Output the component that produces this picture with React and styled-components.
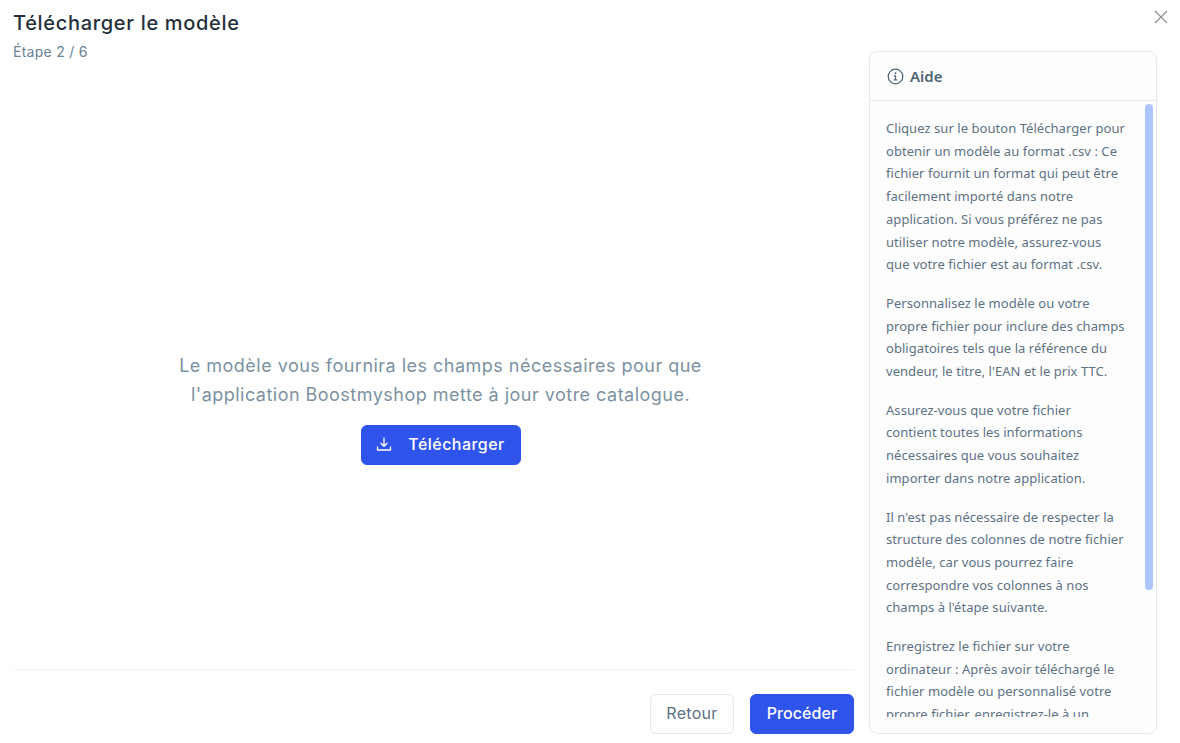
import React from "react";
import styled, { createGlobalStyle } from "styled-components";

const Global = createGlobalStyle`
  html, body { margin: 0; padding: 0; background: #fff; }
  * { box-sizing: border-box; }
`;

const display = `Inter, "Open Sans", sans-serif`;
const body = `"Noto Sans", "Open Sans", sans-serif`;

const Modal = styled.div`
  position: relative;
  width: 1180px;
  height: 743px;
  padding: 8px 23px 9px 13px;
  display: grid;
  grid-template-columns: 841px 288px;
  column-gap: 15px;
  overflow: hidden;
`;
const Main = styled.main`
  display: flex;
  flex-direction: column;
  min-height: 0;
`;
const Title = styled.h1`
  margin: 0;
  font: 500 20px/30px ${display};
  color: #252f3a;
  letter-spacing: 0.68px;
`;
const Step = styled.p`
  margin: 3px 0 0;
  font: 400 14px/22px ${display};
  color: #6a8294;
  letter-spacing: 0.27px;
`;
const Center = styled.div`
  flex: 1;
  display: flex;
  flex-direction: column;
  align-items: center;
  justify-content: center;
  padding: 84px 0 0 14px;
`;
const Lead = styled.p`
  margin: 0;
  width: 560px;
  text-align: center;
  font: 400 18px/29px ${display};
  color: #7c92a2;
  letter-spacing: 0.48px;
`;
const Button = styled.button`
  display: inline-flex;
  align-items: center;
  justify-content: center;
  height: 40px;
  padding: 0 0 2px;
  border-radius: 6px;
  font: ${p => (p.$primary ? 500 : 400)} 16px/24px ${display};
  letter-spacing: ${p => p.$spacing || 0}px;
  cursor: pointer;
  border: 1px solid ${p => (p.$primary ? "#2f54eb" : "#e5e9f0")};
  background: ${p => (p.$primary ? "#2f54eb" : "#fff")};
  color: ${p => (p.$primary ? "#fff" : "#5d717f")};
  width: ${p => p.$width}px;
  gap: ${p => p.$gap || 0}px;
`;
const DownloadButton = styled(Button)`
  margin-top: 16px;
`;
const Footer = styled.footer`
  border-top: 1px solid #eef1f5;
  padding-top: 24px;
  display: flex;
  justify-content: flex-end;
  gap: 16px;
`;
const Panel = styled.aside`
  position: relative;
  margin-top: 43px;
  border: 1px solid #e5e9f2;
  border-radius: 8px;
  background: #fdfdfe;
  display: flex;
  flex-direction: column;
  height: 683px;
  overflow: hidden;
`;
const PanelHead = styled.div`
  height: 49px;
  flex: none;
  display: flex;
  align-items: center;
  gap: 6px;
  padding-left: 17px;
  border-bottom: 1px solid #e5e9f2;
  font: 600 15px/20px ${body};
  color: #4f6373;
`;
const PanelBody = styled.div`
  flex: 1;
  margin-bottom: 16px;
  padding: 16px 30px 0 16px;
  overflow: hidden;
  font: 400 13px/22.7px ${body};
  letter-spacing: 0.05px;
  color: #5d7282;
`;
const Para = styled.p`
  margin: 0 0 16px;
  white-space: pre-line;
`;
const Thumb = styled.div`
  position: absolute;
  top: 52px;
  right: 3px;
  width: 8px;
  height: 486px;
  border-radius: 4px;
  background: #adc6ff;
`;
const Close = styled.button`
  position: absolute;
  top: 9px;
  right: 11px;
  width: 16px;
  height: 16px;
  padding: 0;
  border: 0;
  background: none;
  color: #8a9299;
  cursor: pointer;
`;

const paragraphs = [
  "Cliquez sur le bouton Télécharger pour obtenir un modèle au format .csv : Ce fichier fournit un format qui peut être facilement importé dans notre application. Si vous préférez ne pas utiliser notre modèle, assurez-vous que votre fichier est au format .csv.",
  "Personnalisez le modèle ou votre propre fichier pour inclure des champs obligatoires tels que la référence du vendeur, le titre, l'EAN et le prix TTC.",
  "Assurez-vous que votre fichier\ncontient toutes les informations nécessaires que vous souhaitez importer dans notre application.",
  "Il n'est pas nécessaire de respecter la structure des colonnes de notre fichier modèle, car vous pourrez faire correspondre vos colonnes à nos champs à l'étape suivante.",
  "Enregistrez le fichier sur votre ordinateur : Après avoir téléchargé le fichier modèle ou personnalisé votre propre fichier, enregistrez-le à un emplacement facile à retrouver sur votre ordinateur.",
];

export default function App() {
  return (
    <>
      <Global />
      <Modal>
        <Main>
          <Title>Télécharger le modèle</Title>
          <Step>Étape 2 / 6</Step>
          <Center>
            <Lead>
              Le modèle vous fournira les champs nécessaires pour que l'application Boostmyshop mette à jour votre catalogue.
            </Lead>
            <DownloadButton $primary $width={160} $gap={16} $spacing={0.45}>
              <svg width="16" height="16" viewBox="0 0 16 16" fill="none" stroke="currentColor" strokeWidth="1.3" strokeLinecap="round" strokeLinejoin="round">
                <path d="M8 2v8M5 7.2 8 10.2l3-3M1.5 11v3h13v-3" />
              </svg>
              Télécharger
            </DownloadButton>
          </Center>
          <Footer>
            <Button $width={84} $spacing={0.3}>Retour</Button>
            <Button $primary $width={104} $spacing={0.1}>Procéder</Button>
          </Footer>
        </Main>
        <Panel>
          <PanelHead>
            <svg width="17" height="17" viewBox="0 0 17 17" fill="none" stroke="currentColor" strokeWidth="1.2" strokeLinecap="round">
              <circle cx="8.5" cy="8.5" r="7.3" />
              <path d="M8.5 7.8v4M7.3 7.8h1.2M7.3 11.8h2.4" />
              <circle cx="8.4" cy="5.2" r=".4" />
            </svg>
            Aide
          </PanelHead>
          <PanelBody>
            {paragraphs.map(t => <Para key={t}>{t}</Para>)}
          </PanelBody>
          <Thumb />
        </Panel>
        <Close aria-label="Fermer">
          <svg width="16" height="16" viewBox="0 0 16 16" fill="none" stroke="currentColor" strokeWidth="1.2">
            <path d="M2 2l12 12M14 2 2 14" />
          </svg>
        </Close>
      </Modal>
    </>
  );
}
